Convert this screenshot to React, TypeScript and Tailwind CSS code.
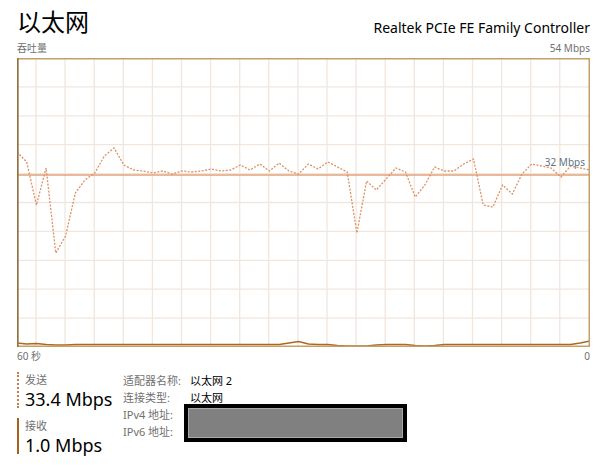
import React from 'react';

const W = 573;
const H = 289;
const STEP = W / 59;

// send throughput, y in page pixels (chart top = 58)
const sendY = [
  152, 162, 205, 168, 253, 236, 193, 180, 173, 156, 148, 165, 170, 171, 173, 171, 174, 171, 172, 171,
  169, 171, 170, 165, 170, 164, 171, 163, 171, 174, 164, 169, 162, 167, 172, 233, 181, 190, 179, 168,
  172, 197, 185, 167, 171, 171, 164, 159, 205, 207, 185, 194, 174, 164, 166, 168, 177, 166, 168, 170,
];

const recvY = [
  343, 344, 343.5, 344.5, 345, 345, 344.5, 344.5, 344.5, 344.5, 344.5, 344.5, 344.5, 344.5, 344.5, 344.5,
  344.5, 344.5, 344.5, 344.5, 344.5, 344.5, 344.5, 344.5, 344.5, 344.5, 344.5, 344.5, 343, 341.5, 344,
  344.5, 344.5, 345.5, 346, 346, 346, 345, 344.5, 344.5, 344.5, 345.5, 346, 345.5, 344.5, 344.5, 344.5,
  344.5, 344.5, 344.5, 344.5, 344.5, 344.5, 344.5, 344.5, 344.5, 344.5, 344.5, 343, 341,
];

const toPoints = (ys: number[]) =>
  ys.map((y, i) => `${(i * STEP).toFixed(1)},${(y - 58).toFixed(1)}`).join(' ');

const Chart: React.FC = () => {
  const vLines = Array.from({ length: 19 }, (_, k) => 19 + 29.1 * k);
  const hLines = Array.from({ length: 9 }, (_, k) => 28.9 * (k + 1));
  return (
    <div className="relative w-[573px] h-[289px]">
      <svg width={W} height={H} viewBox={`0 0 ${W} ${H}`} className="block">
        {vLines.map((x) => (
          <line key={`v${x}`} x1={x} y1={0} x2={x} y2={H} stroke="#f1e6de" strokeWidth={1.3} />
        ))}
        {hLines.map((y) => (
          <line key={`h${y}`} x1={0} y1={y} x2={W} y2={y} stroke="#f1e6de" strokeWidth={1.3} />
        ))}
        <line x1={0} y1={117} x2={W} y2={117} stroke="#e2a27a" strokeWidth={1.3} />
        <polyline
          points={toPoints(sendY)}
          fill="none"
          stroke="#dc9163"
          strokeWidth={1.3}
          strokeDasharray="2 1.5"
        />
        <polyline points={toPoints(recvY)} fill="none" stroke="#b0661f" strokeWidth={1.6} />
        <rect x={0.75} y={0.75} width={W - 1.5} height={H - 1.5} fill="none" stroke="#c3a06a" strokeWidth={1.5} />
        <line x1={0.75} y1={0} x2={0.75} y2={H} stroke="#8f7044" strokeWidth={1.5} />
      </svg>
      <span className="absolute right-[5px] top-[99px] text-[10px] leading-none text-[#5f7281]">32 Mbps</span>
    </div>
  );
};

export default function App() {
  return (
    <div className="w-[600px] h-[473px] bg-white pl-[17px] pr-[10px] overflow-hidden font-['Noto_Sans','Noto_Sans_CJK_SC',sans-serif]">
      <div className="flex items-start justify-between h-[39px] pt-[9px]">
        <span className="text-[24px] leading-[24px] text-black font-['Noto_Sans_CJK_SC',sans-serif]">以太网</span>
        <span className="text-[14px] leading-none text-black mt-[12px]">Realtek PCIe FE Family Controller</span>
      </div>
      <div className="flex justify-between h-[19px] items-center text-[10px] text-[#707070]">
        <span>吞吐量</span>
        <span>54 Mbps</span>
      </div>
      <Chart />
      <div className="flex justify-between h-[19px] items-center text-[10px] text-[#707070]">
        <span>60 秒</span>
        <span>0</span>
      </div>
      <div className="flex items-start mt-[6px]">
        <div className="w-[106px] flex flex-col gap-[10px]">
          <div className="border-l-2 border-dotted border-[#c77b45] pl-[6px] h-[36px] flex flex-col justify-between">
            <span className="text-[11px] leading-none text-[#707070] mt-[2px]">发送</span>
            <span className="text-[18px] leading-none text-black">33.4 Mbps</span>
          </div>
          <div className="border-l-2 border-[#a8621f] pl-[6px] h-[36px] flex flex-col justify-between">
            <span className="text-[11px] leading-none text-[#707070] mt-[2px]">接收</span>
            <span className="text-[18px] leading-none text-black">1.0 Mbps</span>
          </div>
        </div>
        <div className="relative grid grid-cols-[67px_auto] content-start text-[11px] leading-[17px]">
          <span className="text-[#707070]">适配器名称:</span>
          <span className="text-black">以太网 2</span>
          <span className="text-[#707070]">连接类型:</span>
          <span className="text-black">以太网</span>
          <span className="text-[#707070]">IPv4 地址:</span>
          <span></span>
          <span className="text-[#707070]">IPv6 地址:</span>
          <span></span>
          <div className="absolute left-[61px] top-[32px] w-[223px] h-[38px] border-[4px] border-black bg-[#808080] ring-1 ring-inset ring-[#a8a8a8]" />
        </div>
      </div>
    </div>
  );
}
